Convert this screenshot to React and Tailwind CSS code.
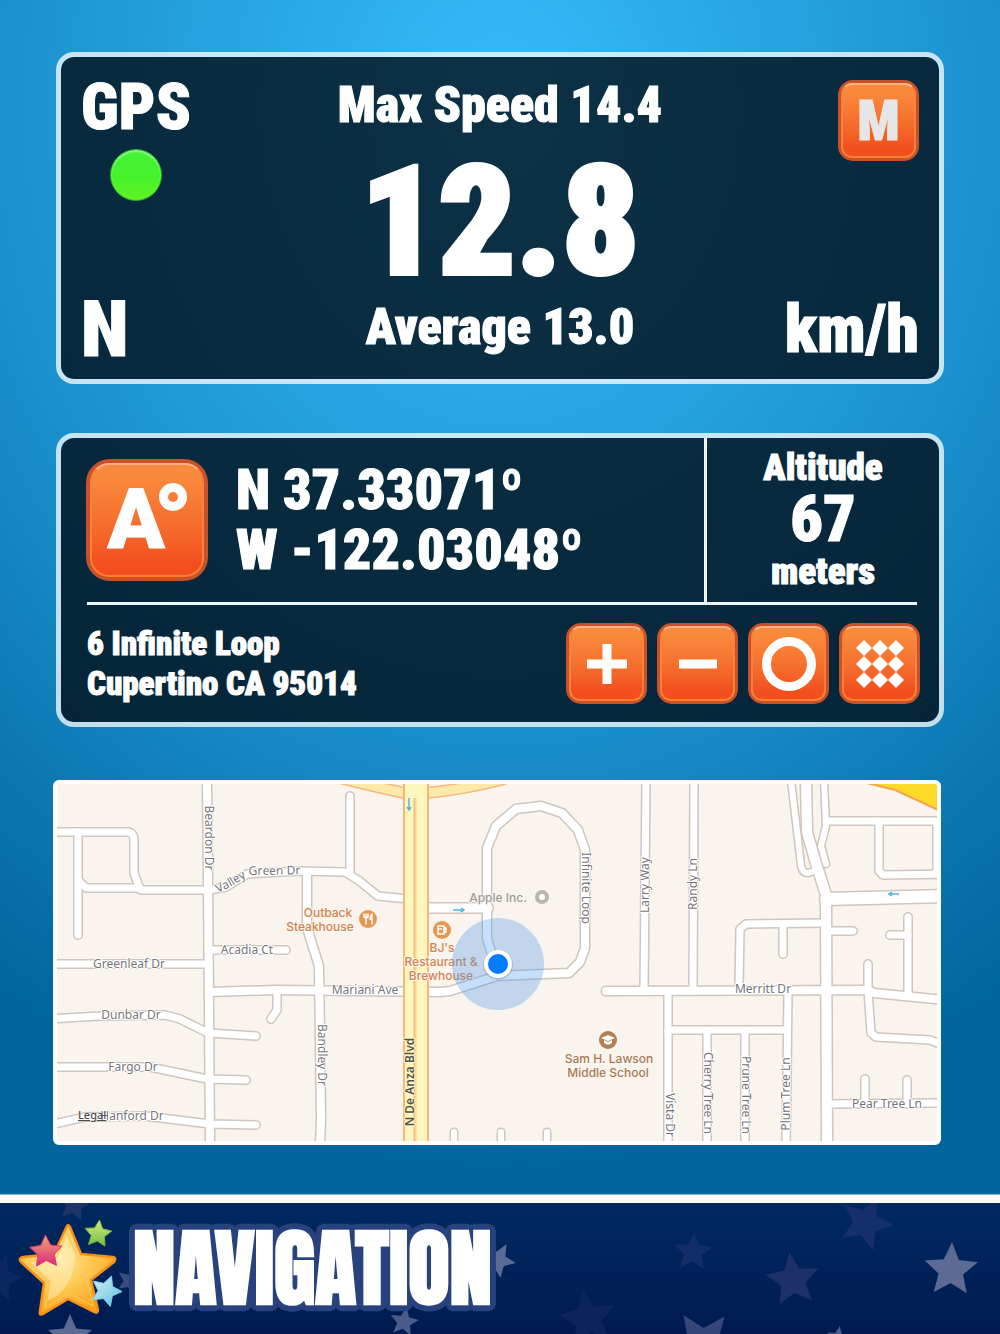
import React from "react";
import clsx from "clsx";

// Street centre lines, in map units
const STREETS = [
  { d: "M207 780 L208 880 L209 1010 L210 1145", w: 8 },
  { d: "M50 832 H127 Q134 832 134 841 V873 L140 889", w: 7 },
  { d: "M78 832 V935", w: 7 },
  { d: "M78 880 L86 888 H136 L142 890 H209", w: 7 },
  { d: "M50 964 H209", w: 7 },
  { d: "M50 1019 L100 1016 L165 1015 L180 1019 L208 1033 L256 1036", w: 7 },
  { d: "M50 1067 H150 L207 1079 L246 1080", w: 7 },
  { d: "M50 1125 L85 1117 L145 1116 L210 1124 L256 1125", w: 7 },
  { d: "M209 890 L226 887 L247 874 L300 871 L345 872 L358 880 L378 896 L408 899", w: 7 },
  { d: "M350 796 V872", w: 7 },
  { d: "M307 872 L307 928 L319 966 L321 1120 L320 1145", w: 8 },
  { d: "M209 950 H286", w: 7 },
  { d: "M209 992 L275 990 L440 992 L450 991 L497 976 L569 973 L580 962 L585 948 V850 L578 830 L562 813 L541 806 L516 809 L496 826 L487 848 V938 L494 962", w: 8 },
  { d: "M277 991 V1010 L271 1019", w: 7 },
  { d: "M424 908 H488", w: 9 },
  { d: "M454 1132 V1145", w: 6 },
  { d: "M501 1132 V1145", w: 6 },
  { d: "M547 1132 V1145", w: 6 },
  { d: "M646 780 L644 991", w: 7 },
  { d: "M694 780 L693 991", w: 7 },
  { d: "M606 991 L868 990 L874 993 L945 1000", w: 8 },
  { d: "M668 991 V1145", w: 7 },
  { d: "M668 1030 H787", w: 7 },
  { d: "M707 1030 V1145", w: 7 },
  { d: "M745 1030 V1145", w: 7 },
  { d: "M788 991 L787 1080 L786 1145", w: 7 },
  { d: "M739 990 L740 929 L746 924 L826 923", w: 7 },
  { d: "M783 924 V954", w: 7 },
  { d: "M791 780 L801 865 Q802 873 808 873 L818 870", w: 6 },
  { d: "M824 780 L826 826 L821 846 L826 864", w: 6 },
  { d: "M806 780 L807 832 L815 860 L826 895 L827 1145", w: 10 },
  { d: "M826 821 H945", w: 7 },
  { d: "M879 821 V871 L883 875 L945 874", w: 7 },
  { d: "M936 821 V874", w: 5 },
  { d: "M826 899 L945 896", w: 12 },
  { d: "M828 931 H853", w: 7 },
  { d: "M908 917 V995", w: 7 },
  { d: "M890 935 H908", w: 7 },
  { d: "M868 964 L868 990 L871 1033 L876 1037 L930 1040 L945 1046", w: 7 },
  { d: "M828 1104 L945 1103", w: 7 },
  { d: "M865 1079 V1104", w: 7 },
  { d: "M907 1080 V1104", w: 7 },
];

const STREET_LABELS = [
  { text: "Valley Green Dr", path: true },
  { text: "Beardon Dr", x: 205, y: 838, turn: 90 },
  { text: "Greenleaf Dr", x: 129, y: 968 },
  { text: "Acadia Ct", x: 247, y: 954 },
  { text: "Dunbar Dr", x: 131, y: 1019 },
  { text: "Fargo Dr", x: 133, y: 1071 },
  { text: "Hanford Dr", x: 132, y: 1120 },
  { text: "Mariani Ave", x: 365, y: 994 },
  { text: "Bandley Dr", x: 318, y: 1055, turn: 90 },
  { text: "Infinite Loop", x: 582, y: 888, turn: 90 },
  { text: "Larry Way", x: 649, y: 885, turn: -90 },
  { text: "Randy Ln", x: 697, y: 884, turn: -90 },
  { text: "Merritt Dr", x: 763, y: 993 },
  { text: "Vista Dr", x: 666, y: 1115, turn: 90 },
  { text: "Cherry Tree Ln", x: 704, y: 1093, turn: 90 },
  { text: "Prune Tree Ln", x: 742, y: 1095, turn: 90 },
  { text: "Plum Tree Ln", x: 790, y: 1094, turn: -90 },
  { text: "Pear Tree Ln", x: 887, y: 1108 },
];

const FOOTER_STARS = [
  { x: 74, y: 1205, r: 17, turn: 10, fill: "#1f3469" },
  { x: 0, y: 1278, r: 24, turn: 15, fill: "#0b2860" },
  { x: 70, y: 1337, r: 23, turn: 0, fill: "#5b6b93" },
  { x: 130, y: 1281, r: 14, turn: 20, fill: "#3a4c7e" },
  { x: 404, y: 1322, r: 15, turn: 10, fill: "#4b5c8a" },
  { x: 498, y: 1260, r: 18, turn: 28, fill: "#5b6b93" },
  { x: 693, y: 1252, r: 20, turn: 4, fill: "#132d66" },
  { x: 588, y: 1319, r: 30, turn: -10, fill: "#0b2459" },
  { x: 866, y: 1223, r: 28, turn: 22, fill: "#152f69" },
  { x: 793, y: 1280, r: 28, turn: -7, fill: "#1d3168" },
  { x: 951, y: 1270, r: 28, turn: 2, fill: "#5b6b93" },
  { x: 703, y: 1344, r: 35, turn: 38, fill: "#34467a" },
  { x: 838, y: 1338, r: 12, turn: 8, fill: "#4b5c8a" },
];

function starPoints(cx, cy, r, turn = 0, inner = 0.46) {
  return Array.from({ length: 10 }, (_, i) => {
    const a = ((i * 36 + turn - 90) * Math.PI) / 180;
    const d = i % 2 ? r * inner : r;
    return `${(cx + d * Math.cos(a)).toFixed(1)},${(cy + d * Math.sin(a)).toFixed(1)}`;
  }).join(" ");
}

function Panel({ className, children, ...props }) {
  return (
    <section
      className={clsx(
        "mx-14 rounded-[18px] border-[5px] border-white/75 bg-[#030e18]/80 bg-clip-padding font-['Roboto_Condensed',Roboto,sans-serif] font-black text-white [-webkit-text-stroke:1px_currentColor]",
        className
      )}
      {...props}
    >
      {children}
    </section>
  );
}

function OrangeButton({ label, large, children }) {
  return (
    <button
      type="button"
      aria-label={label}
      className={clsx(
        "shrink-0 border-[#c8512a] bg-[#c8512a]",
        large ? "size-[122px] rounded-[24px] border-4" : "size-[81px] rounded-[15px] border-[3px]"
      )}
    >
      <span
        className={clsx(
          "flex size-full items-center justify-center border-2 border-x-[#f9813a] border-t-[#fcb184] border-b-[#fb8030] bg-linear-to-b from-[#f98a3c] from-10% via-[#f56d2c] via-55% to-[#f24e1e] to-90%",
          large ? "rounded-[19px]" : "rounded-[11px]"
        )}
      >
        {children}
      </span>
    </button>
  );
}

function SpeedPanel() {
  return (
    <Panel className="grid grid-cols-[1fr_auto_1fr] px-5 pt-[17px] pb-[9px]" aria-label="Speed">
      <div className="flex flex-col items-start justify-between">
        <div className="flex flex-col items-center">
          <h2 className="text-[64px] leading-[68px]">GPS</h2>
          <span className="mt-[7px] size-[52px] rounded-full border border-[#2fae2c] bg-linear-to-b from-[#45f437] via-[#43f32a] to-[#5ef226] shadow-[inset_0_2px_2px_#8ef58a]" />
        </div>
        <p className="text-[78px] leading-[80px]">N</p>
      </div>

      <div className="flex flex-col items-center pt-1.5 pb-[18px]">
        <p className="text-[50px] leading-[50px]">Max Speed 14.4</p>
        <p className="mt-5 text-[152px] leading-[144px] [-webkit-text-stroke:4px_currentColor]">12.8</p>
        <p className="mt-2 text-[50px] leading-[50px]">Average 13.0</p>
      </div>

      <div className="flex flex-col items-end justify-between pt-1.5">
        <OrangeButton label="M">
          <span className="text-[56px] leading-[60px] text-[#e6e6e6]">M</span>
        </OrangeButton>
        <p className="text-[66px] leading-[80px]">km/h</p>
      </div>
    </Panel>
  );
}

function PositionPanel() {
  return (
    <Panel className="mt-[49px]" aria-label="Position">
      <div className="flex">
        <div className="flex flex-1 items-center gap-7 pl-[25px]">
          <OrangeButton label="Angle format" large>
            <span className="flex items-start font-[Roboto,sans-serif]">
              <span className="text-[84px] leading-[90px]">A</span>
              <span className="mt-2 -ml-1.5 size-7 rounded-full border-9 border-white" />
            </span>
          </OrangeButton>
          <p className="text-[56px] leading-[60px]">
            N 37.33071º
            <br />W -122.03048º
          </p>
        </div>
        <dl className="flex w-[235px] flex-col items-center gap-1 border-l-3 border-[#eef6fa] py-2.5 text-center">
          <dt className="text-[37px] leading-[40px]">Altitude</dt>
          <dd className="text-[64px] leading-[56px]">67</dd>
          <dd className="text-[37px] leading-[40px]">meters</dd>
        </dl>
      </div>
      <hr className="mr-[22px] ml-[26px] border-t-3 border-[#eef6fa]" />
      <div className="flex items-center justify-between py-[18px] pr-[19px] pl-[26px]">
        <address className="text-[33px] leading-[40px] not-italic">
          6 Infinite Loop
          <br />
          Cupertino CA 95014
        </address>
        <div className="flex gap-2.5">
          <OrangeButton label="Zoom in">
            <svg viewBox="0 0 40 40" className="size-10" fill="none" stroke="#fff" strokeWidth="9">
              <path d="M20 0 V40 M0 20 H40" />
            </svg>
          </OrangeButton>
          <OrangeButton label="Zoom out">
            <svg viewBox="0 0 40 40" className="size-10" fill="none" stroke="#fff" strokeWidth="9">
              <path d="M1 20 H39" />
            </svg>
          </OrangeButton>
          <OrangeButton label="Centre on position">
            <svg viewBox="0 0 54 54" className="size-[54px]" fill="none" stroke="#fff" strokeWidth="9">
              <circle cx="27" cy="27" r="22.5" />
            </svg>
          </OrangeButton>
          <OrangeButton label="Map type">
            <svg viewBox="0 0 48 48" className="size-12" fill="#fff">
              {[8, 24, 40].map((y) =>
                [8, 24, 40].map((x) => (
                  <path key={`${x}-${y}`} d={`M${x - 8} ${y} L${x} ${y - 8} L${x + 8} ${y} L${x} ${y + 8} Z`} />
                ))
              )}
            </svg>
          </OrangeButton>
        </div>
      </div>
    </Panel>
  );
}

function StreetMap() {
  return (
    <section
      aria-label="Map"
      className="mt-[53px] mr-[59px] ml-[53px] overflow-hidden rounded-md border-4 border-white bg-[#f9f4ed]"
    >
      <svg viewBox="57 784 880 357" className="block h-auto w-full font-['Noto_Sans',sans-serif]">
        <g fill="none" strokeLinecap="round" strokeLinejoin="round">
          {STREETS.map((s) => (
            <path key={s.d} d={s.d} stroke="#cfc6be" strokeWidth={s.w + 3} />
          ))}
          {STREETS.map((s) => (
            <path key={s.d} d={s.d} stroke="#fff" strokeWidth={s.w} />
          ))}
        </g>

        {/* main roads */}
        <g fill="none">
          <path d="M340 778 Q375 787 405 793 M425 793 Q462 790 505 779" stroke="#f5b877" strokeWidth="12" />
          <path d="M340 778 Q375 787 405 793 M425 793 Q462 790 505 779" stroke="#fde9a9" strokeWidth="9" />
          <path d="M416 780 V1145" stroke="#f5b877" strokeWidth="26" />
          <path d="M416 780 V1145" stroke="#fef6bd" strokeWidth="22" />
          <path d="M415 798 V1145" stroke="#f3bd80" strokeWidth="3" />
          <path d="M416 798 V1145" stroke="#fdebc4" strokeWidth="1" />
        </g>
        <path d="M855 780 L895 790 L945 813 V780 Z" fill="#fdda2a" stroke="#f4a44f" strokeWidth="2" />

        <g fill="none" stroke="#4fb4e0" strokeWidth="1.5">
          <path d="M409 798 V810 M407 807 L409 810 L411 807" />
          <path d="M453 910 H464 M461 908 L464 910 L461 912" />
          <path d="M899 894 H889 M892 892 L889 894 L892 896" />
        </g>

        {/* points of interest */}
        <g
          className="font-[Inter,'Noto_Sans',sans-serif]"
          textAnchor="middle"
          fontSize="12"
          fontWeight="500"
          fill="#d4824e"
          stroke="#fbf6ef"
          strokeWidth="2"
          paintOrder="stroke"
          strokeLinejoin="round"
        >
          <text x="328" y="917">Outback</text>
          <text x="320" y="931">Steakhouse</text>
          <text x="442" y="952">BJ's</text>
          <text x="441" y="966">Restaurant &amp;</text>
          <text x="441" y="980">Brewhouse</text>
          <text x="498" y="902" fill="#9b9b9b">Apple Inc.</text>
          <text x="609" y="1063" fill="#a77b55">Sam H. Lawson</text>
          <text x="608" y="1077" fill="#a77b55">Middle School</text>
        </g>

        <circle cx="368" cy="919" r="9" fill="#e59650" />
        <g fill="none" stroke="#fff" strokeWidth="1.5" strokeLinecap="round">
          <path d="M366 914 V924 M364 914 V917 Q366 919 368 917 V914" />
          <path d="M372 914 V924 M372 914 Q370 916 370 919 H372" />
        </g>
        <circle cx="442" cy="930" r="9" fill="#e59650" />
        <path d="M438 926 H444 V934 H438 Z M444 928 H446 V932 H444 M438 929 H442" fill="none" stroke="#fff" strokeWidth="1.5" />
        <circle cx="542" cy="897" r="5" fill="#fff" stroke="#b9b5b1" strokeWidth="4" />
        <circle cx="608" cy="1040" r="9" fill="#b08256" />
        <path d="M601 1038 L608 1035 L615 1038 L608 1041 Z M604 1040 V1043 Q608 1046 612 1043 V1040 L608 1042 Z" fill="#fff" />

        <circle cx="498" cy="964" r="46" fill="#4f9bec" fillOpacity="0.33" />

        <path id="valley-green" d="M218 893 L232 886 L248 876 Q256 874 268 875 L310 874" fill="none" />
        <g textAnchor="middle" fontSize="12" fill="#77757a" stroke="#fff" strokeWidth="2" paintOrder="stroke" strokeLinejoin="round">
          {STREET_LABELS.map((l) =>
            l.path ? (
              <text key={l.text} textAnchor="start">
                <textPath href="#valley-green">{l.text}</textPath>
              </text>
            ) : (
              <text key={l.text} transform={`translate(${l.x} ${l.y}) rotate(${l.turn || 0})`}>
                {l.text}
              </text>
            )
          )}
          <text transform="translate(414 1082) rotate(-90)" fontWeight="600" fill="#55534f" stroke="#fef6bd">
            N De Anza Blvd
          </text>
        </g>

        <a href="#legal">
          <text x="78" y="1119" fontSize="11" fontWeight="500" fill="#4d4d4d" textDecoration="underline">
            Legal
          </text>
        </a>

        <circle cx="498" cy="965" r="15" fill="#52667f" fillOpacity="0.25" />
        <circle cx="498" cy="964" r="14" fill="#fff" />
        <circle cx="498" cy="964" r="10" fill="#057cff" />
      </svg>
    </section>
  );
}

function StarLogo() {
  return (
    <svg viewBox="17 1218 108 100" className="h-[100px] w-[108px] shrink-0" aria-hidden="true">
      <defs>
        <radialGradient id="gold" cx="0.4" cy="0.35" r="0.65">
          <stop offset="0" stopColor="#ffe9a6" />
          <stop offset="0.5" stopColor="#fdcb58" />
          <stop offset="1" stopColor="#fca51d" />
        </radialGradient>
        <linearGradient id="pink" x1="0" y1="0" x2="0" y2="1">
          <stop offset="0" stopColor="#f2a26b" />
          <stop offset="0.5" stopColor="#e46a78" />
          <stop offset="1" stopColor="#e0207c" />
        </linearGradient>
        <linearGradient id="green" x1="0" y1="0" x2="0" y2="1">
          <stop offset="0" stopColor="#d9ea7c" />
          <stop offset="1" stopColor="#6cc04a" />
        </linearGradient>
        <linearGradient id="sky" x1="0" y1="0" x2="1" y2="1">
          <stop offset="0" stopColor="#d8f1ee" />
          <stop offset="1" stopColor="#57bfe4" />
        </linearGradient>
      </defs>
      <g strokeLinejoin="round">
        <path
          d="M67 1226 Q68 1224 70 1227 L81 1254 L113 1257 Q117 1258 114 1262 L91 1280 L98 1310 Q98 1314 94 1312 L68 1299 L43 1314 Q39 1316 40 1311 L44 1283 L21 1262 Q18 1258 23 1257 L54 1254 Z"
          fill="url(#gold)"
          stroke="#f78f1e"
          strokeWidth="2.5"
        />
        <path
          d="M67 1233 L78 1258 L107 1261 L87 1279 L93 1306 L68 1293 L45 1308 L49 1281 L28 1262 L57 1257 Z"
          fill="none"
          stroke="#fdc75a"
          strokeWidth="1"
        />
        <path d="M67 1236 L57 1259 L30 1262 L51 1281 L47 1301 Q74 1290 75 1255 Z" fill="#fff4c8" fillOpacity="0.45" />
        <polygon points={starPoints(46, 1252, 17, -2, 0.5)} fill="url(#pink)" stroke="#d8386f" />
        <polygon points={starPoints(98, 1234, 14, 6, 0.5)} fill="url(#green)" stroke="#7fb542" />
        <polygon points={starPoints(106, 1291, 16, 20, 0.5)} fill="url(#sky)" stroke="#7dcbe6" />
      </g>
    </svg>
  );
}

function Footer() {
  return (
    <footer className="relative overflow-hidden border-t-8 border-white bg-linear-to-b from-[#002a60] to-[#001a50] shadow-[0_-1px_1px_#7fb2d2]">
      <svg
        viewBox="0 1203 1000 131"
        preserveAspectRatio="xMidYMid slice"
        className="absolute inset-0 size-full"
        aria-hidden="true"
      >
        {FOOTER_STARS.map((s) => (
          <polygon key={`${s.x}-${s.y}`} points={starPoints(s.x, s.y, s.r, s.turn)} fill={s.fill} />
        ))}
      </svg>
      <div className="relative flex items-center gap-2 pt-[15px] pb-4 pl-[17px]">
        <StarLogo />
        <h1 className="font-[Anton,'Roboto_Condensed',sans-serif] text-[85px] leading-[100px] font-black text-white [text-shadow:6px_0_#27427d,5px_3px_#27427d,3px_5px_#27427d,0_6px_#27427d,-3px_5px_#27427d,-5px_3px_#27427d,-6px_0_#27427d,-5px_-3px_#27427d,-3px_-5px_#27427d,0_-6px_#27427d,3px_-5px_#27427d,5px_-3px_#27427d]">
          NAVIGATION
        </h1>
      </div>
    </footer>
  );
}

export default function App() {
  return (
    <div className="flex min-h-screen flex-col bg-[radial-gradient(90%_80%_at_50%_8%,#35bcfb_0%,#1a8fcb_58%,#00659d_100%)]">
      <main className="flex-1 pt-[52px] pb-[50px]">
        <SpeedPanel />
        <PositionPanel />
        <StreetMap />
      </main>
      <Footer />
    </div>
  );
}
